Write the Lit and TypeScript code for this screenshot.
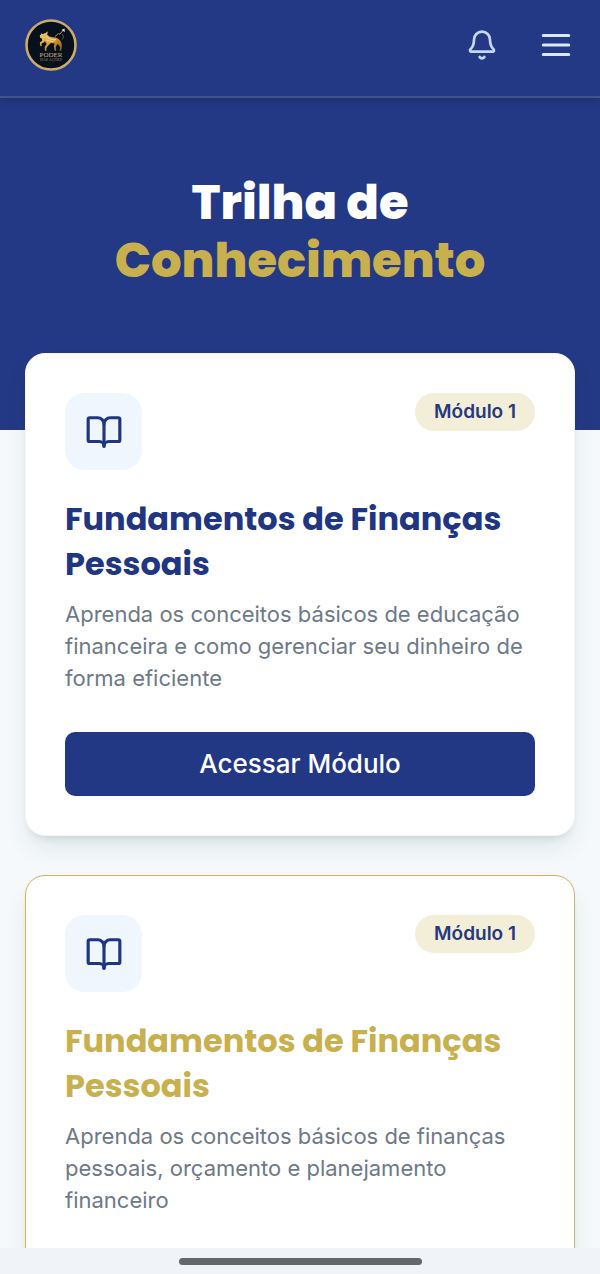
import { LitElement, html, css, svg } from 'lit';
import { customElement, property } from 'lit/decorators.js';

interface Module {
  badge: string;
  title: string;
  description: string;
  highlighted: boolean;
}

const MODULES: Module[] = [
  {
    badge: 'Módulo 1',
    title: 'Fundamentos de Finanças Pessoais',
    description:
      'Aprenda os conceitos básicos de educação financeira e como gerenciar seu dinheiro de forma eficiente',
    highlighted: false,
  },
  {
    badge: 'Módulo 1',
    title: 'Fundamentos de Finanças Pessoais',
    description:
      'Aprenda os conceitos básicos de finanças pessoais, orçamento e planejamento financeiro',
    highlighted: true,
  },
];

const bellIcon = svg`
  <path d="M10.268 21a2 2 0 0 0 3.464 0" />
  <path d="M3.262 15.326A1 1 0 0 0 4 17h16a1 1 0 0 0 .74-1.673C19.41 13.956 18 12.499 18 8A6 6 0 0 0 6 8c0 4.499-1.411 5.956-2.738 7.326" />
`;

const menuIcon = svg`<path d="M4 6h16M4 12h16M4 18h16" />`;

const bookIcon = svg`
  <path d="M12 7v14" />
  <path d="M3 18a1 1 0 0 1-1-1V4a1 1 0 0 1 1-1h5a4 4 0 0 1 4 4 4 4 0 0 1 4-4h5a1 1 0 0 1 1 1v13a1 1 0 0 1-1 1h-6a3 3 0 0 0-3 3 3 3 0 0 0-3-3z" />
`;

@customElement('brand-logo')
export class BrandLogo extends LitElement {
  static styles = css`
    :host {
      display: block;
    }
    svg {
      display: block;
      width: 52px;
      height: 52px;
    }
    text {
      font-family: 'Liberation Serif', serif;
      text-anchor: middle;
    }
    .name {
      font-size: 7px;
      fill: #cfb27a;
    }
    .tagline {
      font-size: 4px;
      fill: #a08a5f;
    }
  `;

  render() {
    return html`
      <svg viewBox="0 0 52 52" role="img" aria-label="Poder das Ações">
        <defs>
          <linearGradient id="gold" x1="0" y1="0" x2="1" y2="1">
            <stop offset="0" stop-color="#f3d27a" />
            <stop offset=".5" stop-color="#dc9f3c" />
            <stop offset="1" stop-color="#8a5a20" />
          </linearGradient>
        </defs>
        <circle cx="26" cy="26" r="24.5" fill="#07101d" stroke="#c9ad66" stroke-width="2.6" />
        <!-- bull -->
        <path
          d="M16 13.500c.5 1.300 1.300 1.700 2.500 1.500.6-.8 1.400-1.100 2.300-1l1.500-1.800c.7 1.300.4 2.400-.4 3 1.300 1.900 3.300 2.900 6.100 3.100 3.500.2 6 1.400 7.500 3.800 1.500 2.300 1.800 5 1 7.600l-.3 2h-1.600l.6-3.700-2.600-3.200-1.800 3.200.4 3.700h-1.500l-.8-4.300.6-2.900-3.600-.4-2.800 2.600-1.800 2.200.2 2.800h-1.600l-.2-3.600 1.900-3-1.700-2.900-1.100 1.300-2.300 1 .2 2.500-1.300.2-.6-3.700 2.400-1.700-.3-2.300-1.600-.6-.6-2.500 1.400-1z"
          fill="url(#gold)"
        />
        <path d="M21 17.500c2.500 2.500 5.500 3.300 10 3.200M21.500 21c2.500 1.300 5 1.600 8 .9" fill="none" stroke="#f8e29b" stroke-width=".9" />
        <!-- tail and rising arrow -->
        <path d="M30 17.500l3.500-3 1.500.8 3-4" fill="none" stroke="#b9a27a" stroke-width=".9" />
        <path d="M36.500 11l3-1.600.3 3.500z" fill="#efe4cc" />
        <path d="M37.500 15l1 3-1.300 2.500" fill="none" stroke="#75572b" stroke-width=".9" />
        <text class="name" x="26" y="37.500">PODER</text>
        <text class="tagline" x="26" y="42">DAS AÇÕES</text>
      </svg>
    `;
  }
}

@customElement('module-card')
export class ModuleCard extends LitElement {
  static styles = css`
    :host {
      display: block;
    }
    .card {
      box-sizing: border-box;
      padding: 39px;
      background: #fff;
      border: 1px solid #f3f5f6;
      border-radius: 20px;
      box-shadow:
        0 14px 24px -4px rgba(30, 45, 40, 0.1),
        0 6px 10px -6px rgba(30, 45, 40, 0.16);
    }
    .card.highlighted {
      border-color: #c9b65f;
    }
    .top {
      display: flex;
      justify-content: space-between;
      align-items: flex-start;
      margin-bottom: 26px;
    }
    .icon {
      display: grid;
      place-items: center;
      width: 77px;
      height: 77px;
      border-radius: 20px;
      background: #eff6fe;
    }
    .icon svg {
      width: 38px;
      height: 38px;
      fill: none;
      stroke: #213682;
      stroke-width: 2;
      stroke-linecap: round;
      stroke-linejoin: round;
    }
    .badge {
      padding: 0 19px;
      border-radius: 20px;
      background: #f3eed8;
      color: #26397c;
      font-size: 19px;
      font-weight: 600;
      line-height: 38px;
    }
    h2 {
      margin: 0 0 12px;
      color: #213682;
      font-family: Poppins, Inter, sans-serif;
      font-size: 32px;
      font-weight: 700;
      line-height: 45px;
    }
    .highlighted h2 {
      color: #c9b04e;
    }
    p {
      margin: 0 0 38px;
      color: #6d7988;
      font-size: 22px;
      line-height: 32px;
    }
    button {
      display: block;
      width: 100%;
      padding: 0;
      border: 0;
      border-radius: 10px;
      background: #233884;
      color: #fff;
      font: 500 26px/64px Inter, sans-serif;
      cursor: pointer;
    }
  `;

  @property({ attribute: false }) module!: Module;

  render() {
    const { badge, title, description, highlighted } = this.module;
    return html`
      <article class="card ${highlighted ? 'highlighted' : ''}">
        <div class="top">
          <span class="icon"><svg viewBox="0 0 24 24" aria-hidden="true">${bookIcon}</svg></span>
          <span class="badge">${badge}</span>
        </div>
        <h2>${title}</h2>
        <p>${description}</p>
        <button type="button">Acessar Módulo</button>
      </article>
    `;
  }
}

@customElement('app-root')
export class AppRoot extends LitElement {
  static styles = css`
    :host {
      display: flex;
      flex-direction: column;
      height: 100vh;
      background: #f5f9fc;
      font-family: Inter, sans-serif;
    }
    header {
      z-index: 1;
      display: flex;
      align-items: center;
      justify-content: space-between;
      padding: 19px 25px 25px;
      border-bottom: 2px solid #42548c;
      background: #243985;
      box-shadow: 0 2px 8px rgba(10, 20, 60, 0.3);
    }
    .actions {
      display: flex;
      align-items: center;
      gap: 39px;
    }
    .actions button {
      display: block;
      padding: 0;
      border: 0;
      background: none;
      color: #dbe8fe;
      cursor: pointer;
    }
    .actions svg {
      display: block;
      width: 38px;
      height: 38px;
      fill: none;
      stroke: currentColor;
      stroke-width: 2;
      stroke-linecap: round;
      stroke-linejoin: round;
    }
    .actions .bell {
      color: #c5d8f8;
    }
    .actions .bell svg {
      width: 32px;
      height: 32px;
    }
    main {
      flex: 1;
      min-height: 0;
      overflow-y: auto;
      scrollbar-width: none;
    }
    .hero {
      padding: 76px 25px 140px;
      background: #243985;
      text-align: center;
    }
    h1 {
      margin: 0;
      color: #fff;
      font-family: Poppins, Inter, sans-serif;
      font-size: 48px;
      font-weight: 800;
      line-height: 58px;
    }
    h1 span {
      display: block;
      color: #c9b04e;
    }
    .modules {
      display: grid;
      gap: 39px;
      margin-top: -77px;
      padding: 0 25px 40px;
    }
    footer {
      display: flex;
      justify-content: center;
      padding: 10px 0 9px;
      background: #f0f3f7;
    }
    .handle {
      width: 243px;
      height: 7px;
      border-radius: 4px;
      background: #64676b;
    }
  `;

  render() {
    return html`
      <header>
        <brand-logo></brand-logo>
        <div class="actions">
          <button class="bell" type="button" aria-label="Notificações">
            <svg viewBox="0 0 24 24">${bellIcon}</svg>
          </button>
          <button type="button" aria-label="Menu">
            <svg viewBox="0 0 24 24">${menuIcon}</svg>
          </button>
        </div>
      </header>
      <main>
        <section class="hero">
          <h1>Trilha de <span>Conhecimento</span></h1>
        </section>
        <section class="modules">
          ${MODULES.map((m) => html`<module-card .module=${m}></module-card>`)}
        </section>
      </main>
      <footer><div class="handle"></div></footer>
    `;
  }
}

declare global {
  interface HTMLElementTagNameMap {
    'brand-logo': BrandLogo;
    'module-card': ModuleCard;
    'app-root': AppRoot;
  }
}
